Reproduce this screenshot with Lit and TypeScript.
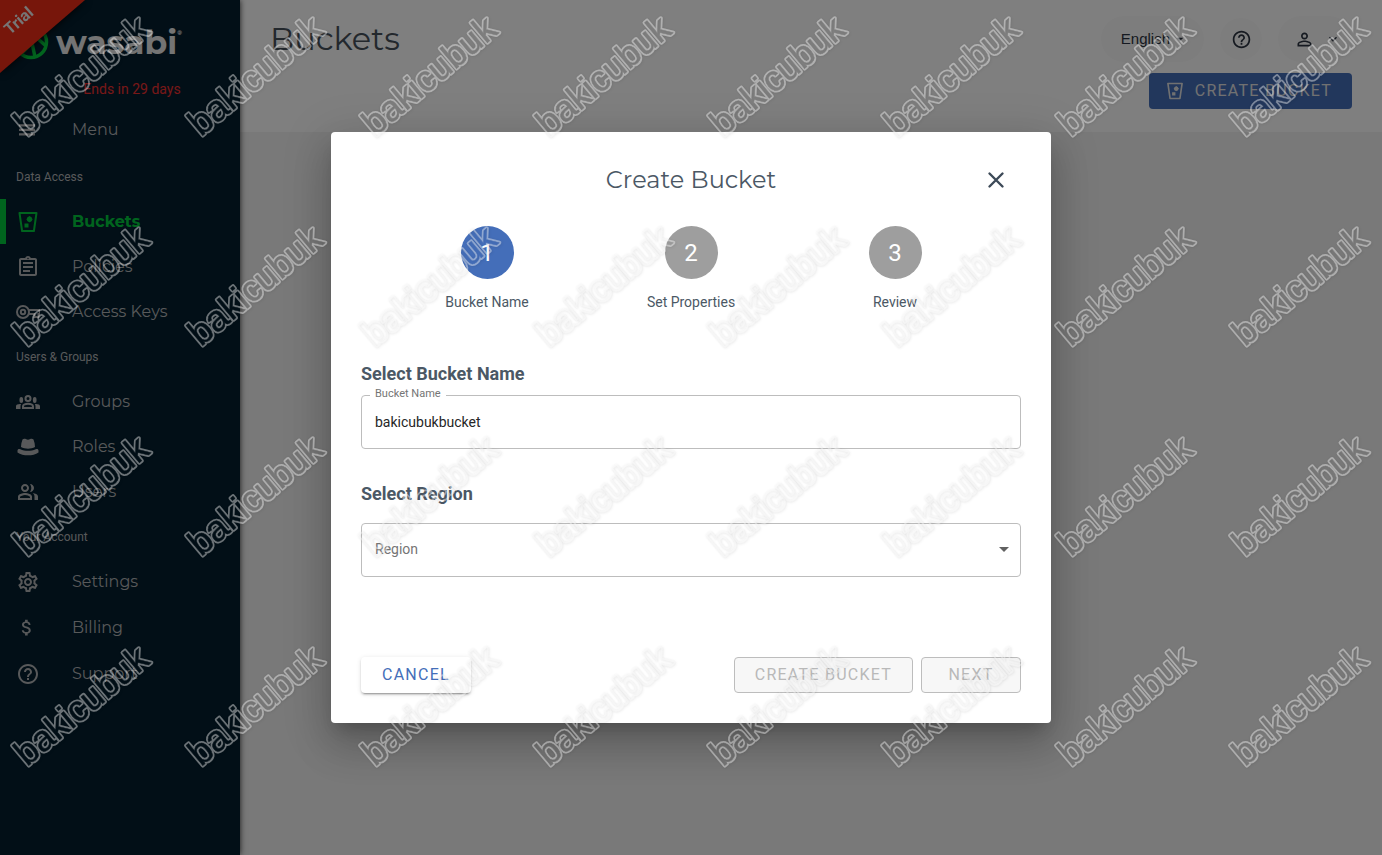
import { LitElement, html, css, svg } from "lit";
import { customElement, property, state } from "lit/decorators.js";
import { classMap } from "lit/directives/class-map.js";

const icons: Record<string, unknown> = {
  menu: svg`<path d="M3 17.500h16v-2.200H3v2.200zm0-4.500h16v-2.200H3v2.200zm0-6.700v2.200h16V6.300H3z"/>`,
  bucket: svg`<path fill="none" stroke="currentColor" stroke-width="2" stroke-linejoin="round" d="M3.500 3h17l-2.600 18H6.100z"/><path d="m13.500 6 3.200 3.200-3.200 3.200-3.200-3.200zM8.500 13.500h4v4h-4z"/><circle cx="13.500" cy="9.200" r="2.600"/>`,
  clipboard: svg`<path d="M7 15h7v2H7zm0-4h10v2H7zm0-4h10v2H7zm12-4h-4.180C14.400 1.840 13.300 1 12 1s-2.400.840-2.820 2H5c-1.100 0-2 .9-2 2v14c0 1.100.9 2 2 2h14c1.100 0 2-.9 2-2V5c0-1.100-.9-2-2-2zm-7-.250c.410 0 .750.340.750.750s-.340.750-.750.750-.750-.340-.750-.750.340-.750.750-.750zM19 19H5V5h14v14z"/>`,
  key: svg`<g fill="none" stroke="currentColor" stroke-width="2"><circle cx="7" cy="12" r="6"/><circle cx="7" cy="12" r="2.200"/><path d="M12.700 10H24v4h-1.500v3h-4v-3h-6"/></g>`,
  groups: svg`<path d="M4 14c-.990 0-1.930.210-2.780.580C.480 14.900 0 15.620 0 16.430V19h4.500v-2.610c0-.830.230-1.610.630-2.290C4.760 14.040 4.390 14 4 14zm20 2.430c0-.810-.480-1.530-1.220-1.850-.850-.370-1.790-.580-2.780-.580-.390 0-.760.040-1.130.1.400.680.630 1.460.630 2.290V19H24v-2.570zm-7.760-2.780c-1.170-.520-2.610-.9-4.240-.9s-3.070.390-4.240.9C6.680 14.130 6 15.210 6 16.390V19h12v-2.610c0-1.180-.680-2.260-1.760-2.740zM8.070 17c.090-.930.130-1.390.910-1.690.970-.380 1.990-.560 3.020-.560s2.050.180 3.020.560c.770.300.810.760.910 1.690H8.070z"/><circle cx="12" cy="8.500" r="2.500" fill="none" stroke="currentColor" stroke-width="2"/><path d="M3.500 9a1.800 2 0 0 1 3.600 0v2a1.800 2 0 0 1-3.600 0zm13.400 0a1.800 2 0 0 1 3.600 0v2a1.800 2 0 0 1-3.600 0z"/>`,
  hat: svg`<path d="M6.500 4.500C8 3.200 9.500 4 12 4.800c2.500-.8 4-1.600 5.500-.3 1 2.500 1.500 5 1.500 7.500-4 2.200-10 2.200-14 0 0-2.500.5-5 1.500-7.500zM1.500 15.500c0-1.500 1.500-2 2.800-1.300 4.700 2.200 10.700 2.200 15.400 0 1.300-.7 2.800-.2 2.800 1.300v2C17 21.300 7 21.300 1.500 17.500z"/>`,
  people: svg`<path d="M9 13c-2.340 0-7 1.170-7 3.500V20h14v-3.500c0-2.330-4.660-3.500-7-3.500zM4 18v-1.300c.840-.580 3-1.700 5-1.700s4.200 1.100 5 1.700V18H4zM9 12c2.200 0 4-1.800 4-4s-1.800-4-4-4-4 1.800-4 4 1.800 4 4 4zm0-6c1.100 0 2 .9 2 2s-.9 2-2 2-2-.9-2-2 .9-2 2-2zm7.700 7.100c1.100.8 1.800 2 1.800 3.400V20H22v-3.500c0-2-3-3-5.300-3.400zM14 12c2.200 0 4-1.800 4-4s-1.800-4-4-4c.8 1.200 1.300 2.500 1.300 4s-.5 2.800-1.300 4z"/>`,
  gear: svg`<path d="M19.430 12.980c.040-.320.070-.640.070-.980s-.030-.660-.070-.980l2.110-1.650c.190-.150.240-.420.120-.640l-2-3.460a.5.5 0 0 0-.610-.220l-2.490 1c-.520-.4-1.080-.730-1.690-.980l-.380-2.650A.488.488 0 0 0 14 2h-4c-.250 0-.460.180-.490.420l-.380 2.650c-.610.250-1.170.590-1.690.980l-2.490-1a.5.5 0 0 0-.610.220l-2 3.460c-.130.220-.070.490.120.640l2.110 1.650c-.040.320-.070.650-.070.980s.030.660.070.980l-2.110 1.650c-.190.150-.240.420-.120.640l2 3.460c.120.220.390.3.610.220l2.490-1c.520.4 1.080.730 1.690.980l.380 2.650c.030.240.240.420.490.420h4c.250 0 .460-.180.490-.420l.380-2.650c.610-.250 1.170-.590 1.690-.980l2.490 1c.230.080.490 0 .610-.220l2-3.460a.5.5 0 0 0-.120-.640l-2.110-1.650zm-1.980-1.710c.040.310.050.520.050.730s-.020.430-.050.730l-.140 1.130.890.7 1.080.840-.7 1.210-1.270-.510-1.040-.420-.9.680c-.430.320-.840.560-1.250.730l-1.060.430-.160 1.130-.2 1.350h-1.400l-.190-1.350-.160-1.130-1.060-.430c-.430-.180-.830-.410-1.230-.710l-.910-.7-1.060.430-1.270.510-.7-1.210 1.080-.840.890-.7-.140-1.130c-.030-.310-.050-.540-.050-.740s.020-.430.050-.730l.140-1.130-.890-.7-1.080-.840.7-1.210 1.270.510 1.040.420.9-.680c.430-.320.840-.560 1.250-.730l1.060-.430.160-1.130.2-1.350h1.390l.190 1.350.160 1.130 1.060.430c.430.180.830.410 1.230.710l.910.7 1.060-.430 1.270-.510.7 1.210-1.070.850-.890.7.140 1.130zM12 8c-2.210 0-4 1.790-4 4s1.790 4 4 4 4-1.790 4-4-1.790-4-4-4zm0 6c-1.100 0-2-.9-2-2s.9-2 2-2 2 .9 2 2-.9 2-2 2z"/>`,
  dollar: svg`<g transform="translate(2 1) scale(.88)"><path d="M9.800 10.900c-2.270-.590-3-1.200-3-2.150 0-1.090 1.010-1.850 2.700-1.850 1.780 0 2.440.850 2.500 2.100h2.210c-.070-1.720-1.120-3.300-3.210-3.810V3H8v2.160c-1.940.420-3.500 1.680-3.500 3.610 0 2.310 1.910 3.460 4.700 4.130 2.500.6 3 1.480 3 2.410 0 .690-.490 1.790-2.700 1.790-2.060 0-2.870-.920-2.980-2.100h-2.200c.120 2.190 1.760 3.420 3.680 3.830V21h3v-2.150c1.950-.370 3.500-1.500 3.500-3.550 0-2.840-2.430-3.810-4.700-4.400z"/></g>`,
  help: svg`<path d="M11 18h2v-2h-2v2zm1-16C6.480 2 2 6.480 2 12s4.480 10 10 10 10-4.480 10-10S17.520 2 12 2zm0 18c-4.410 0-8-3.590-8-8s3.590-8 8-8 8 3.590 8 8-3.590 8-8 8zm0-14c-2.210 0-4 1.790-4 4h2c0-1.100.9-2 2-2s2 .9 2 2c0 2-3 1.750-3 5h2c0-2.250 3-2.500 3-5 0-2.210-1.790-4-4-4z"/>`,
  person: svg`<path d="M12 5.900a2.100 2.100 0 1 1 0 4.200 2.100 2.100 0 0 1 0-4.200m0 9c2.970 0 6.100 1.460 6.100 2.100v1.100H5.900V17c0-.640 3.130-2.100 6.100-2.100M12 4C9.790 4 8 5.790 8 8s1.790 4 4 4 4-1.790 4-4-1.790-4-4-4zm0 9c-2.670 0-8 1.340-8 4v3h16v-3c0-2.660-5.330-4-8-4z"/>`,
  chevron: svg`<path d="M16.590 8.590 12 13.170 7.410 8.590 6 10l6 6 6-6z"/>`,
  caret: svg`<path d="m7 10 5 5 5-5z"/>`,
  close: svg`<path fill="none" stroke="currentColor" stroke-width="2.400" stroke-linecap="round" d="m5.500 5.500 13 13m0-13-13 13"/>`,
};

@customElement("ui-icon")
export class UiIcon extends LitElement {
  @property() name = "";
  static styles = css`
    :host { display: inline-flex; width: 24px; height: 24px; flex: none; }
    svg { width: 100%; height: 100%; fill: currentColor; }
  `;
  render() {
    return html`<svg viewBox="0 0 24 24" aria-hidden="true">${icons[this.name]}</svg>`;
  }
}

@customElement("side-nav")
export class SideNav extends LitElement {
  private sections = [
    { title: "Data Access", items: [["bucket", "Buckets"], ["clipboard", "Policies"], ["key", "Access Keys"]] },
    { title: "Users & Groups", items: [["groups", "Groups"], ["hat", "Roles"], ["people", "Users"]] },
    { title: "Your Account", items: [["gear", "Settings"], ["dollar", "Billing"], ["help", "Support"]] },
  ];
  static styles = css`
    :host { display: block; position: relative; background: #041e2e; color: #b0b2b4; font-family: Roboto, sans-serif; }
    .brand { display: flex; align-items: center; gap: 7px; height: 50px; padding: 17px 0 0 13px; }
    .mark { width: 36px; height: 36px; }
    .word { color: #e8e8e8; font: 700 33px/36px Montserrat, Lato, sans-serif; display: flex; align-items: flex-start; }
    .reg { font-size: 6px; line-height: 18px; }
    .ribbon { position: absolute; inset: 0 auto auto 0; filter: drop-shadow(0 0 4px #000); }
    .corner { width: 85px; height: 73px; background: #ee2c16; clip-path: polygon(0 0, 100% 0, 0 100%); }
    .trial { position: absolute; left: 1px; top: 14px; width: 36px; font-size: 16px; line-height: 14px; font-weight: 700; color: #ececec; text-align: center; transform: rotate(-41deg); }
    .ends { margin: 0; padding: 12px 0 0 24px; text-align: center; color: #f03030; font-size: 14px; line-height: 20px; height: 28px; }
    a, .menu { display: flex; align-items: center; gap: 32px; width: 100%; height: 45px; box-sizing: border-box; padding: 0 16px; border: 0; background: none; color: inherit; text-align: left; text-decoration: none; font: 400 16px/24px Montserrat, Inter, sans-serif; }
    a.active { color: #00c83c; font-weight: 700; padding-left: 10px; border-left: 6px solid #00c83c; }
    section:last-child a { height: 46px; }
    h2 { margin: 0; padding: 0 16px; height: 45px; font-size: 12px; font-weight: 400; line-height: 47px; }
    .menu + section h2 { height: 47px; line-height: 50px; }
  `;
  render() {
    return html`
      <div class="brand">
        <svg class="mark" viewBox="0 0 36 36" aria-hidden="true">
          <g fill="none" stroke="#04c83c" stroke-width="3.500">
            <circle cx="18" cy="18" r="15.500" />
            <path d="M8 30 30 8M19 19l3 14M24 14l9 8M4 12l16 7" />
          </g>
        </svg>
        <span class="word">wasabi<span class="reg">®</span></span>
      </div>
      <div class="ribbon"><div class="corner"></div><span class="trial">Trial</span></div>
      <p class="ends">Ends in 29 days</p>
      <button class="menu"><ui-icon name="menu"></ui-icon>Menu</button>
      ${this.sections.map((s) => html`
        <section>
          <h2>${s.title}</h2>
          ${s.items.map(([icon, label]) => html`
            <a href="#" class=${classMap({ active: label === "Buckets" })}><ui-icon name=${icon}></ui-icon>${label}</a>`)}
        </section>
      `)}
    `;
  }
}

@customElement("create-bucket-dialog")
export class CreateBucketDialog extends LitElement {
  @state() private bucket = "bakicubukbucket";
  static styles = css`
    :host { display: block; width: 100%; max-width: 720px; box-sizing: border-box; padding: 30px; border-radius: 4px; background: #fff; color: #4b5865; font-family: Roboto, sans-serif; box-shadow: 0 11px 15px -7px rgba(0, 0, 0, 0.2), 0 24px 38px 3px rgba(0, 0, 0, 0.14), 0 9px 46px 8px rgba(0, 0, 0, 0.12); }
    header { display: grid; grid-template-columns: 50px 1fr 50px; align-items: center; height: 34px; }
    h1 { grid-column: 2; margin: 0; text-align: center; font: 400 24px/36px Montserrat, Inter, sans-serif; }
    .close { display: flex; justify-content: center; padding: 0; border: 0; background: none; color: #3d4a58; }
    .steps { display: grid; grid-template-columns: repeat(3, 1fr); list-style: none; margin: 0; padding: 30px 24px 0; }
    li { display: flex; flex-direction: column; align-items: center; gap: 13px; font-size: 14px; line-height: 20px; }
    .dot { width: 53px; height: 53px; border-radius: 50%; background: #9e9e9e; color: #fff; font-size: 24px; line-height: 54px; text-align: center; }
    .current .dot { background: #446eb9; }
    h2 { margin: 0; font-size: 18px; line-height: 24px; font-weight: 700; }
    .name { margin-top: 50px; }
    .region { margin-top: 33px; }
    fieldset { margin: 2px 0 0; padding: 0; border: 1px solid #bdbdbd; border-radius: 4px; display: flex; height: 61px; box-sizing: border-box; min-width: 0; }
    legend { margin-left: 8px; padding: 0 5px; font-size: 11px; line-height: 12px; height: 15px; color: #757575; }
    input { flex: 1; min-width: 0; border: 0; outline: 0; background: none; padding: 0 13px 7px; color: #262626; font: 400 14px/20px Roboto, sans-serif; }
    .select { position: relative; margin-top: 17px; }
    .select ui-icon { position: absolute; right: 5px; top: 14px; color: #616161; }
    select { width: 100%; height: 54px; padding: 0 13px 2px; appearance: none; border: 1px solid #bdbdbd; border-radius: 4px; background: none; color: #757575; font: 400 14px/20px Roboto, sans-serif; }
    footer { display: flex; gap: 8px; margin-top: 80px; }
    footer button { height: 36px; padding: 0 20px; border: 1px solid #bdbdbd; border-radius: 4px; background: #f7f7f7; color: #b9b9b9; font: 400 16px/24px Roboto, sans-serif; letter-spacing: 1.25px; }
    footer .cancel { margin-right: auto; border-color: transparent; background: #fff; color: #446eb9; box-shadow: 0 3px 1px -2px rgba(0, 0, 0, 0.2), 0 2px 2px rgba(0, 0, 0, 0.14), 0 1px 5px rgba(0, 0, 0, 0.12); }
    footer .next { min-width: 100px; }
  `;
  render() {
    return html`
      <header>
        <h1>Create Bucket</h1>
        <button class="close" aria-label="Close"><ui-icon name="close"></ui-icon></button>
      </header>
      <ol class="steps">
        ${["Bucket Name", "Set Properties", "Review"].map((label, i) => html`
          <li class=${classMap({ current: i === 0 })}><span class="dot">${i + 1}</span>${label}</li>`)}
      </ol>
      <h2 class="name">Select Bucket Name</h2>
      <fieldset>
        <legend><label for="bucket">Bucket Name</label></legend>
        <input id="bucket" .value=${this.bucket} @input=${(e: Event) => (this.bucket = (e.target as HTMLInputElement).value)} />
      </fieldset>
      <h2 class="region">Select Region</h2>
      <div class="select">
        <select aria-label="Region"><option>Region</option></select>
        <ui-icon name="caret"></ui-icon>
      </div>
      <footer>
        <button class="cancel">CANCEL</button>
        <button disabled>CREATE BUCKET</button>
        <button class="next" disabled>NEXT</button>
      </footer>
    `;
  }
}

@customElement("app-root")
export class AppRoot extends LitElement {
  static styles = css`
    :host { display: grid; grid-template-columns: 240px 1fr; min-height: 100vh; position: relative; overflow: hidden; font-family: Roboto, sans-serif; background: #f2f2f2; }
    side-nav { box-shadow: 0 0 6px rgba(0, 0, 0, 0.8); z-index: 1; }
    .top { display: flex; justify-content: space-between; align-items: flex-start; height: 132px; box-sizing: border-box; padding: 16px 30px 0 30px; background: #fff; }
    h1 { margin: 0; color: #46505a; font: 400 32px/46px Montserrat, Inter, sans-serif; }
    .side { display: flex; flex-direction: column; align-items: flex-end; gap: 11px; }
    .tools { display: flex; gap: 16px; }
    .pill { display: flex; align-items: center; justify-content: center; gap: 2px; height: 46px; padding: 0 16px 0 20px; border: 0; border-radius: 23px; background: #fbfbfb; color: #2c3542; font: 400 15px/24px "Liberation Sans", sans-serif; }
    .round { width: 42px; height: 42px; padding: 0; margin-top: 2px; }
    .tools ui-icon { width: 21px; height: 21px; }
    .tools .small { width: 16px; height: 16px; }
    .user { gap: 10px; padding: 0 11px 0 16px; }
    .create { display: flex; align-items: center; gap: 10px; height: 36px; padding: 0 20px 0 16px; border: 0; border-radius: 4px; background: #446eb9; color: #e3e3e3; font: 400 16px/24px Roboto, sans-serif; letter-spacing: 1.25px; }
    .create ui-icon { width: 20px; height: 20px; }
    .backdrop { position: absolute; inset: 0; z-index: 2; display: flex; align-items: center; justify-content: center; background: rgba(0, 0, 0, 0.5); }
    .marks { position: absolute; inset: 0; z-index: 3; width: 100%; height: 100%; pointer-events: none; filter: drop-shadow(0 0 1px rgba(0, 0, 0, 0.16)) drop-shadow(1px 1px 1px rgba(0, 0, 0, 0.12)); }
    .marks text { font: 400 36px "Liberation Sans", sans-serif; stroke-linejoin: round; }
    .outer { fill: #fff; stroke: #fff; stroke-width: 4px; }
    .core { fill: #000; stroke: #000; stroke-width: 0.500px; }
    .sheet { fill: rgba(255, 255, 255, 0.42); }
  `;
  render() {
    return html`
      <side-nav></side-nav>
      <main>
        <div class="top">
          <h1>Buckets</h1>
          <div class="side">
            <div class="tools">
              <button class="pill">English<ui-icon class="small" name="caret"></ui-icon></button>
              <button class="pill round" aria-label="Help"><ui-icon name="help"></ui-icon></button>
              <button class="pill user" aria-label="Account"><ui-icon name="person"></ui-icon><ui-icon class="small" name="chevron"></ui-icon></button>
            </div>
            <button class="create"><ui-icon name="bucket"></ui-icon>CREATE BUCKET</button>
          </div>
        </div>
      </main>
      <div class="backdrop"><create-bucket-dialog role="dialog" aria-modal="true"></create-bucket-dialog></div>
      <svg class="marks" aria-hidden="true">
        <mask id="outline" maskUnits="userSpaceOnUse" x="0" y="0" width="100%" height="100%">
          ${[0, 1, 2, 3].map((r) => [0, 1, 2, 3, 4, 5, 6, 7].map((c) => svg`
            <g transform="translate(${c * 174 + 27} ${r * 210 + 137}) rotate(-40)">
              <text class="outer">bakicubuk</text><text class="core">bakicubuk</text>
            </g>`))}
        </mask>
        <rect class="sheet" width="100%" height="100%" mask="url(#outline)" />
      </svg>
    `;
  }
}
